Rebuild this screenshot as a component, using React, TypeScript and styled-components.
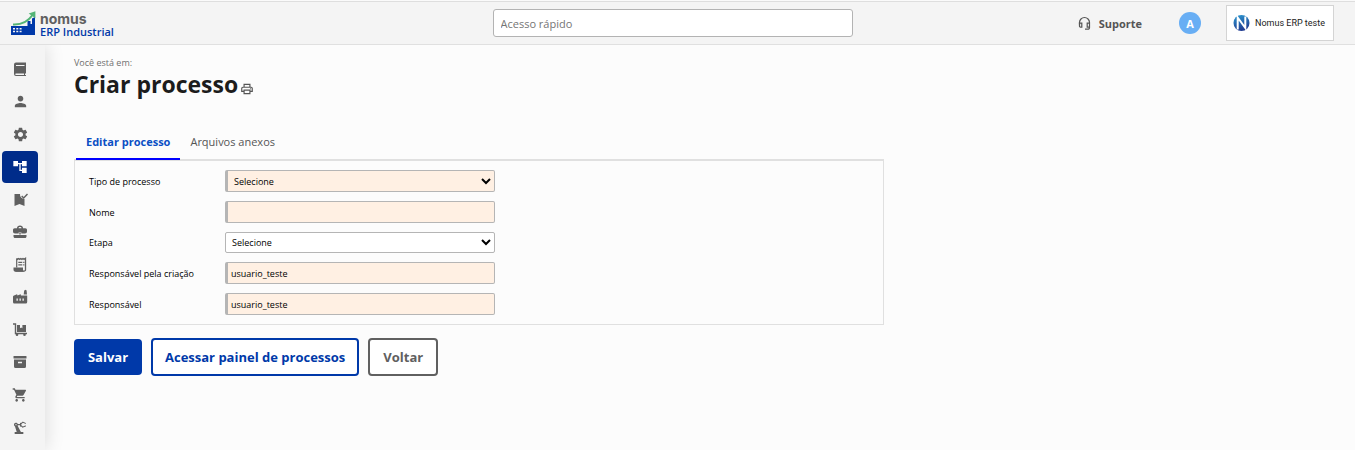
import React from "react";
import styled, { createGlobalStyle, css } from "styled-components";
import {
  MdPerson,
  MdSettings,
  MdAccountTree,
  MdShoppingCart,
  MdPrecisionManufacturing,
  MdOutlinePrint,
} from "react-icons/md";

const GlobalStyle = createGlobalStyle`
  * { box-sizing: border-box; }
  body {
    margin: 0;
    background: #fcfcfc;
    font-family: "Open Sans", "Noto Sans", sans-serif;
    color: #000;
  }
`;

const Page = styled.div`
  display: flex;
  flex-direction: column;
  min-height: 100vh;
`;

const Header = styled.header`
  display: grid;
  grid-template-columns: 1fr 360px 1fr;
  align-items: center;
  height: 45px;
  padding: 1px 21px 0 11px;
  background: #f4f4f4;
  border-top: 1px solid #fafafa;
  border-bottom: 1px solid #e0e0e0;
  box-shadow: inset 0 1px 0 #dedede;
`;

const Logo = styled.a`
  display: flex;
  align-items: center;
  gap: 4px;
  text-decoration: none;
`;

const LogoText = styled.span`
  display: flex;
  flex-direction: column;
  padding-top: 4px;
`;

const LogoName = styled.span`
  font-family: Inter, sans-serif;
  font-size: 14px;
  font-weight: 700;
  line-height: 12px;
  color: #606060;
`;

const LogoProduct = styled.span`
  font-size: 11px;
  font-weight: 600;
  line-height: 13px;
  color: #0039a9;
`;

const Search = styled.input`
  height: 28px;
  padding: 0 7px;
  border: 1px solid #b3b3b3;
  border-radius: 3px;
  background: #fff;
  font: 11px "Open Sans", sans-serif;
  &::placeholder {
    color: #757575;
    opacity: 1;
  }
`;

const HeaderRight = styled.div`
  display: flex;
  align-items: center;
  justify-content: flex-end;
`;

const Support = styled.a`
  display: flex;
  align-items: center;
  gap: 8px;
  color: #555;
  font-size: 11px;
  font-weight: 700;
  text-decoration: none;
`;

const Avatar = styled.button`
  width: 22px;
  height: 22px;
  margin: 0 25px 0 37px;
  padding: 0;
  border: 0;
  border-radius: 50%;
  background: #68aef4;
  color: #fff;
  font: 700 11px "Open Sans", sans-serif;
`;

const Company = styled.div`
  display: flex;
  align-items: center;
  gap: 5px;
  width: 108px;
  height: 36px;
  padding: 0 6px;
  border: 1px solid #d4d4d4;
  background: #fff;
  font: 9px Roboto, sans-serif;
  color: #222;
  white-space: nowrap;
`;

const Body = styled.div`
  display: flex;
  flex: 1;
`;

const Sidebar = styled.nav`
  display: flex;
  flex-direction: column;
  width: 45px;
  padding: 8px 7px 6px 2px;
  background: #f4f4f4;
  box-shadow: 2px 0 18px rgba(0, 0, 0, 0.12);
  clip-path: inset(0 -30px 0 0);
`;

const NavItem = styled.a<{ $active?: boolean }>`
  display: flex;
  flex: 1;
  align-items: center;
  justify-content: center;
  border-radius: 4px;
  color: ${(p) => (p.$active ? "#fff" : "#606060")};
  background: ${(p) => (p.$active ? "#002c8a" : "transparent")};
`;

const Main = styled.main`
  flex: 1;
  padding: 11px 54px 11px 29px;
`;

const Breadcrumb = styled.div`
  font-size: 9px;
  line-height: 14px;
  color: #707070;
`;

const TitleRow = styled.div`
  display: flex;
  align-items: center;
  gap: 2px;
`;

const Title = styled.h1`
  margin: 0;
  font-size: 23px;
  font-weight: 700;
  line-height: 28px;
  color: #1c1c1c;
`;

const PrintButton = styled.button`
  display: flex;
  margin-top: 10px;
  padding: 0;
  border: 0;
  background: none;
  color: #555;
`;

const Content = styled.div`
  width: 66%;
  min-width: 560px;
`;

const Tabs = styled.div`
  display: flex;
  position: relative;
  z-index: 1;
  margin-top: 27px;
  margin-bottom: -1px;
  padding-left: 2px;
`;

const Tab = styled.button<{ $active?: boolean }>`
  height: 35px;
  padding: 0 10px;
  border: 0;
  border-bottom: 2px solid ${(p) => (p.$active ? "#0000ff" : "transparent")};
  background: none;
  color: ${(p) => (p.$active ? "#0b4fc4" : "#555")};
  font: ${(p) => (p.$active ? 700 : 400)} 11px "Open Sans", sans-serif;
`;

const Panel = styled.form`
  display: flex;
  flex-direction: column;
  gap: 9px;
  padding: 9px 14px;
  border: 1px solid #e0e0e0;
  border-top-width: 2px;
`;

const Row = styled.div`
  display: flex;
  align-items: center;
`;

const Label = styled.label`
  width: 136px;
  font-size: 9px;
`;

const fieldStyle = css<{ $required?: boolean }>`
  width: 270px;
  height: ${(p) => (p.$required ? 22 : 21)}px;
  border: 1px solid #b5b5b5;
  border-radius: 2px;
  border-left-width: ${(p) => (p.$required ? 3 : 1)}px;
  background-color: ${(p) => (p.$required ? "#fff0e3" : "#fff")};
  color: #000;
  font: 9px "Open Sans", sans-serif;
`;

const Input = styled.input<{ $required?: boolean }>`
  ${fieldStyle}
  padding: 0 3px;
`;

const Select = styled.select<{ $required?: boolean }>`
  ${fieldStyle}
  padding: 0 2px;
`;

const Actions = styled.div`
  display: flex;
  align-items: center;
  gap: 9px;
  margin-top: 13px;
`;

const Button = styled.button<{ $tone: "solid" | "primary" | "neutral" }>`
  height: ${(p) => (p.$tone === "solid" ? 36 : 38)}px;
  min-width: 68px;
  padding: 0 ${(p) => (p.$tone === "primary" ? 12 : 13)}px;
  border: 2px solid ${(p) => (p.$tone === "neutral" ? "#606060" : "#0039a9")};
  border-width: ${(p) => (p.$tone === "solid" ? 0 : 2)}px;
  border-radius: 4px;
  background: ${(p) => (p.$tone === "solid" ? "#0039a9" : "#fff")};
  color: ${(p) =>
    p.$tone === "solid" ? "#fff" : p.$tone === "neutral" ? "#606060" : "#0039a9"};
  font: 700 13px "Open Sans", sans-serif;
`;

const Glyph = ({ children }: { children: React.ReactNode }) => (
  <svg width="16" height="16" viewBox="0 0 16 16" fill="currentColor" aria-hidden="true">
    {children}
  </svg>
);

const BookIcon = () => (
  <Glyph>
    <path
      fillRule="evenodd"
      d="M4 1.500h10V12.500h-1V14h1v1H4a2 2 0 0 1-2-2V3.500a2 2 0 0 1 2-2Zm0 2.500v1h8.500V4ZM4 12.500a.75.75 0 0 0 0 1.500h8v-1.500Z"
    />
  </Glyph>
);

const BookmarkIcon = () => (
  <Glyph>
    <path d="M2.500 2H8a4.500 4.500 0 0 0 4.500 5v7l-5-2-5 2Z" />
    <path d="m9.700 4 2 2L15.500 2" fill="none" stroke="currentColor" strokeWidth="1.400" />
  </Glyph>
);

const CaseIcon = () => (
  <Glyph>
    <path
      fillRule="evenodd"
      d="M5 4.200C5 2.500 6.200 1.500 8 1.500s3 1 3 2.700h2.200C14.500 4.200 15 5 15 6v1.500c0 1.200-.8 2-2 2H9.300V8.300H6.700v1.200H3c-1.200 0-2-.8-2-2V6c0-1 .5-1.800 1.800-1.800Zm1.500 0h3C9.500 3.300 9 2.900 8 2.900s-1.500.4-1.500 1.300Z"
    />
    <rect x="7.300" y="8.500" width="1.400" height="2" />
    <path d="M1.500 11h13v1.500c0 .8-.6 1.500-1.500 1.500H3c-.9 0-1.500-.7-1.500-1.500Z" />
  </Glyph>
);

const ReceiptIcon = () => (
  <Glyph>
    <path
      d="m4.700 1.500.9.800.9-.8.9.8.9-.8.9.8.9-.8.9.8.900-.8.9.8.700-.8V12.500a1.500 1.500 0 0 1-1.500 1.700H3.500"
      fill="none"
      stroke="currentColor"
      strokeWidth="1.300"
    />
    <path d="M4.100 1.500h1.200v9H4.100ZM6.300 4.700h4v1.200h-4ZM6.300 7.300h4v1.200h-4ZM11.200 4.700h1.200v1.200h-1.200ZM11.200 7.300h1.200v1.200h-1.200Z" />
    <path d="M1.500 10.500H11v2.300c0 .8.300 1.400.9 2H3.500c-1.100 0-2-.8-2-2Z" />
  </Glyph>
);

const FactoryIcon = () => (
  <Glyph>
    <path
      fillRule="evenodd"
      d="M1 8c0-.8.300-1.200 1-1.500l2.500-1.100c.5-.2.900 0 .9.500v.6L8 5.400c.5-.2.900 0 .9.500v.6h6.300V13a1.500 1.500 0 0 1-1.500 1.500h-11A1.500 1.500 0 0 1 1 13Zm3.500 1.500v2.300h1.300V9.500Zm3 0v2.300h1.300V9.500Zm3 0v2.300h1.300V9.500Z"
    />
    <path d="m11.700 5.600.5-4.100 1.500-.8.900.8.400 4.100Z" />
  </Glyph>
);

const TrolleyIcon = () => (
  <Glyph>
    <path d="M1 2h2.500v9.500H15" fill="none" stroke="currentColor" strokeWidth="1.400" />
    <path d="M5 3h3v3.200l1.200-.8 1.200.8V3H14v7H5Z" />
    <circle cx="5" cy="12.700" r="1.300" />
    <circle cx="12.500" cy="12.700" r="1.300" />
  </Glyph>
);

const ArchiveIcon = () => (
  <Glyph>
    <rect x="1.500" y="2" width="13" height="2.600" rx=".6" />
    <path fillRule="evenodd" d="M2 5.500h12v7a1.500 1.500 0 0 1-1.500 1.500h-9A1.500 1.500 0 0 1 2 12.500ZM6 7.700v1.500h4V7.700Z" />
  </Glyph>
);

const NomusMark = () => (
  <svg width="25" height="26" viewBox="0 0 25 26" aria-hidden="true">
    <path
      fill="#0039a9"
      fillRule="evenodd"
      d="M0 16h16.500v-5h3v3H21V8.500L24 7v18H0ZM2 18v1.500h2V18Zm3.300 0v1.500h2V18Zm3.300 0v1.500h2V18ZM2 20.700v1.500h2v-1.500Zm3.300 0v1.500h2v-1.500Zm3.300 0v1.500h2v-1.500Z"
    />
    <path d="M2 14.500C11 15 17 11.500 21.500 5" fill="none" stroke="#54b476" strokeWidth="2" />
    <path d="m17.700 3.500 6.700-2.300v7Z" fill="#54b476" />
  </svg>
);

const HeadsetIcon = () => (
  <svg width="13" height="14" viewBox="0 0 13 14" fill="none" stroke="#555" strokeWidth="1.200" aria-hidden="true">
    <path d="M1.500 8.500V6.500a5 5 0 0 1 10 0v5.200a1.500 1.500 0 0 1-1.500 1.500H7" />
    <path d="M1.500 7.200h2.300v4H2.500a1 1 0 0 1-1-1ZM11.500 7.200H9.200v4h2.300" />
  </svg>
);

const CompanyMark = () => (
  <svg width="17" height="18" viewBox="0 0 17 18" aria-hidden="true">
    <defs>
      <linearGradient id="mark" x1="0" y1="0" x2="0.300" y2="1">
        <stop offset="0" stopColor="#2d9bd3" />
        <stop offset="1" stopColor="#203c91" />
      </linearGradient>
    </defs>
    <circle cx="8.500" cy="9" r="8" fill="url(#mark)" />
    <path d="M4.700 15.500V3.500L12.300 14V2.500" fill="none" stroke="#fff" strokeWidth="2" />
  </svg>
);

const navItems = [
  { label: "Cadastros", icon: <BookIcon /> },
  { label: "Pessoas", icon: <MdPerson size={17} /> },
  { label: "Configurações", icon: <MdSettings size={17} /> },
  { label: "Processos", icon: <MdAccountTree size={16} />, active: true },
  { label: "Qualidade", icon: <BookmarkIcon /> },
  { label: "Comercial", icon: <CaseIcon /> },
  { label: "Fiscal", icon: <ReceiptIcon /> },
  { label: "Produção", icon: <FactoryIcon /> },
  { label: "Expedição", icon: <TrolleyIcon /> },
  { label: "Estoque", icon: <ArchiveIcon /> },
  { label: "Compras", icon: <MdShoppingCart size={16} /> },
  { label: "Manutenção", icon: <MdPrecisionManufacturing size={16} /> },
];

export default function App() {
  return (
    <Page>
      <GlobalStyle />
      <Header>
        <Logo href="#" aria-label="nomus ERP Industrial">
          <NomusMark />
          <LogoText>
            <LogoName>nomus</LogoName>
            <LogoProduct>ERP Industrial</LogoProduct>
          </LogoText>
        </Logo>
        <Search type="search" placeholder="Acesso rápido" aria-label="Acesso rápido" />
        <HeaderRight>
          <Support href="#">
            <HeadsetIcon />
            Suporte
          </Support>
          <Avatar type="button">A</Avatar>
          <Company>
            <CompanyMark />
            Nomus ERP teste
          </Company>
        </HeaderRight>
      </Header>
      <Body>
        <Sidebar>
          {navItems.map((item) => (
            <NavItem key={item.label} href="#" aria-label={item.label} $active={item.active}>
              {item.icon}
            </NavItem>
          ))}
        </Sidebar>
        <Main>
          <Breadcrumb>Você está em:</Breadcrumb>
          <TitleRow>
            <Title>Criar processo</Title>
            <PrintButton type="button" aria-label="Imprimir">
              <MdOutlinePrint size={14} />
            </PrintButton>
          </TitleRow>
          <Content>
            <Tabs role="tablist">
              <Tab type="button" role="tab" aria-selected="true" $active>
                Editar processo
              </Tab>
              <Tab type="button" role="tab" aria-selected="false">
                Arquivos anexos
              </Tab>
            </Tabs>
            <Panel>
              <Row>
                <Label htmlFor="tipo">Tipo de processo</Label>
                <Select id="tipo" $required>
                  <option>Selecione</option>
                </Select>
              </Row>
              <Row>
                <Label htmlFor="nome">Nome</Label>
                <Input id="nome" type="text" $required />
              </Row>
              <Row>
                <Label htmlFor="etapa">Etapa</Label>
                <Select id="etapa">
                  <option>Selecione</option>
                </Select>
              </Row>
              <Row>
                <Label htmlFor="criador">Responsável pela criação</Label>
                <Input id="criador" type="text" defaultValue="usuario_teste" $required />
              </Row>
              <Row>
                <Label htmlFor="responsavel">Responsável</Label>
                <Input id="responsavel" type="text" defaultValue="usuario_teste" $required />
              </Row>
            </Panel>
            <Actions>
              <Button type="button" $tone="solid">Salvar</Button>
              <Button type="button" $tone="primary">Acessar painel de processos</Button>
              <Button type="button" $tone="neutral">Voltar</Button>
            </Actions>
          </Content>
        </Main>
      </Body>
    </Page>
  );
}
